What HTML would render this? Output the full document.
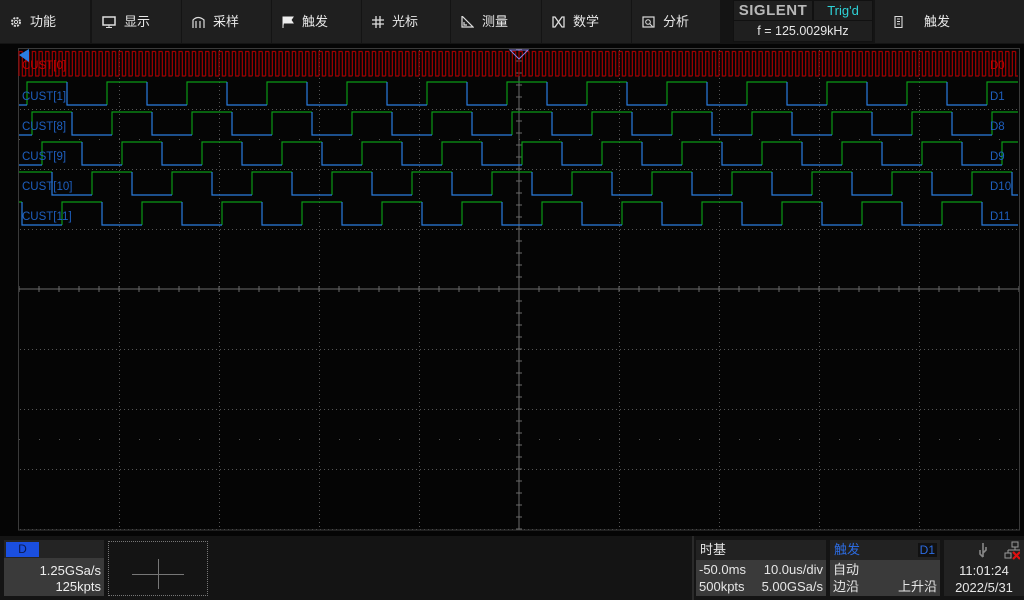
<!DOCTYPE html>
<html><head><meta charset="utf-8"><style>
*{margin:0;padding:0;box-sizing:border-box}
body{width:1024px;height:600px;background:#050505;overflow:hidden;position:relative;font-family:"Liberation Sans","Noto Sans CJK SC",sans-serif;color:#e6e6e6}
.top{position:absolute;left:0;top:0;width:1024px;height:44px;background:#141414}
.mi{position:absolute;top:0;height:43px;background:#1f1f1f;font-size:13px;line-height:43px;padding-left:10px;color:#e8e8e8}
.mi svg{vertical-align:-2px;margin-right:8px}
.bot{position:absolute;left:0;top:536px;width:1024px;height:64px;background:#141414}
.abs{position:absolute}
</style></head><body>
<div class="top">
 <div class="mi" style="left:0;width:90px"><svg width="12" height="12" viewBox="0 0 12 12"><circle cx="6" cy="6" r="4" fill="none" stroke="#ddd" stroke-width="2" stroke-dasharray="2 1.2"/><circle cx="6" cy="6" r="1.6" fill="none" stroke="#ddd"/></svg>功能</div>
 <div class="mi" style="left:92px;width:89px"><svg width="14" height="12" viewBox="0 0 14 12"><rect x="1" y="1" width="12" height="8" fill="none" stroke="#ddd" stroke-width="1.5"/><path d="M7 9v2M4 11.5h6" stroke="#ddd"/></svg>显示</div>
 <div class="mi" style="left:182px;width:89px"><svg width="13" height="12" viewBox="0 0 13 12"><path d="M1 12V4Q6 -1 12 4V12M4 12V5M8 12V5" fill="none" stroke="#ddd" stroke-width="1.2"/></svg>采样</div>
 <div class="mi" style="left:272px;width:89px"><svg width="12" height="12" viewBox="0 0 12 12"><path d="M1 12V1h10l-2 3 2 3H2" fill="#eee" stroke="#eee"/></svg>触发</div>
 <div class="mi" style="left:362px;width:88px"><svg width="12" height="12" viewBox="0 0 12 12"><path d="M4 0v12M8 0v12M0 4h12M0 8h12" stroke="#ddd" stroke-width="1.3"/></svg>光标</div>
 <div class="mi" style="left:451px;width:90px"><svg width="13" height="12" viewBox="0 0 13 12"><path d="M1 0V11H12ZM3 6v3h3" fill="none" stroke="#ddd" stroke-width="1.2"/></svg>测量</div>
 <div class="mi" style="left:542px;width:89px"><svg width="13" height="12" viewBox="0 0 13 12"><path d="M1 1h2l3.5 5 3.5-5h2v10h-2l-3.5-5-3.5 5H1Z" fill="none" stroke="#ddd" stroke-width="1.3"/></svg>数学</div>
 <div class="mi" style="left:632px;width:88px"><svg width="13" height="12" viewBox="0 0 13 12"><rect x="1" y="1" width="11" height="10" fill="none" stroke="#ddd" stroke-width="1.2"/><circle cx="6" cy="6" r="2.3" fill="none" stroke="#ddd"/><path d="M7.5 7.5l3 3" stroke="#ddd"/></svg>分析</div>
 <div class="abs" style="left:733px;top:0;width:140px;height:42px;background:#111"></div>
 <div class="abs" style="left:734px;top:1px;width:78px;height:19px;background:#1f1f1f;color:#b8b8b8;font-weight:bold;font-size:15px;line-height:19px;text-align:center;letter-spacing:0.5px">SIGLENT</div>
 <div class="abs" style="left:814px;top:1px;width:58px;height:19px;background:#1f1f1f;color:#2ed3d8;font-size:13px;line-height:20px;text-align:center">Trig'd</div>
 <div class="abs" style="left:734px;top:21px;width:138px;height:20px;background:#1f1f1f;font-size:12.5px;line-height:20px;text-align:center">f = 125.0029kHz</div>
 <div class="mi" style="left:875px;width:149px;height:43px;padding-left:18px"><svg width="11" height="12" viewBox="0 0 11 12"><path d="M2 0.5h7v11H2ZM4 3h3M4 5.5h3M4 8h3" fill="none" stroke="#ddd" stroke-width="1.1"/></svg><span style="margin-left:12px">触发</span></div>
</div>
<svg class="abs" style="left:0;top:44px" width="1024" height="492" id="scr">
 <g id="grid"></g>
 <rect x="18.5" y="4.5" width="1001" height="481.5" fill="none" stroke="#3a3a3a"/>
 <g id="wav" fill="none" stroke-width="1.2"></g>
 <g font-size="11.5" font-family="Liberation Sans,sans-serif">
  <text x="22" y="25" fill="#c00000">CUST[0]</text><text x="990" y="25" fill="#c00000">D0</text>
  <text x="22" y="56" fill="#1e5fbf">CUST[1]</text><text x="990" y="56" fill="#1e5fbf">D1</text>
  <text x="22" y="86" fill="#1e5fbf">CUST[8]</text><text x="990" y="86" fill="#1e5fbf">D8</text>
  <text x="22" y="116" fill="#1e5fbf">CUST[9]</text><text x="990" y="116" fill="#1e5fbf">D9</text>
  <text x="22" y="146" fill="#1e5fbf">CUST[10]</text><text x="990" y="146" fill="#1e5fbf">D10</text>
  <text x="22" y="176" fill="#1e5fbf">CUST[11]</text><text x="990" y="176" fill="#1e5fbf">D11</text>
 </g>
 <path d="M19 11L29 5V18Z" fill="#2a7de1"/>
 <path d="M510 6h18l-9 9Z" fill="none" stroke="#8a7fe0"/>
</svg>
<div class="bot">
 <div class="abs" style="left:4px;top:4px;width:100px;height:56px;background:#3a3a3a"></div>
 <div class="abs" style="left:4px;top:4px;width:100px;height:18px;background:#242424"></div>
 <div class="abs" style="left:6px;top:6px;width:33px;height:15px;background:#1a4fe0;color:#0c1a50;font-size:12px;text-align:center;line-height:15px">D</div>
 <div class="abs" style="left:4px;top:27px;width:97px;text-align:right;font-size:13px;line-height:16px;color:#eee">1.25GSa/s<br>125kpts</div>
 <div class="abs" style="left:108px;top:5px;width:100px;height:55px;border:1px dotted #777"></div>
 <div class="abs" style="left:132px;top:38px;width:52px;height:1px;background:#777"></div>
 <div class="abs" style="left:158px;top:23px;width:1px;height:30px;background:#777"></div>
 <div class="abs" style="left:692px;top:0;width:2px;height:64px;background:#2a2a2a"></div>
 <div class="abs" style="left:696px;top:4px;width:130px;height:20px;background:#222;font-size:13px;line-height:20px;padding-left:4px">时基</div>
 <div class="abs" style="left:696px;top:24px;width:130px;height:36px;background:#3a3a3a;font-size:13px;line-height:17px;padding:1px 3px">
  <div style="display:flex;justify-content:space-between"><span>-50.0ms</span><span>10.0us/div</span></div>
  <div style="display:flex;justify-content:space-between"><span>500kpts</span><span>5.00GSa/s</span></div></div>
 <div class="abs" style="left:830px;top:4px;width:110px;height:20px;background:#222;font-size:13px;line-height:20px;padding-left:4px;color:#2c6be0">触发<span style="position:absolute;right:3px;top:3px;background:#111;font-size:12px;line-height:14px;padding:0 2px">D1</span></div>
 <div class="abs" style="left:830px;top:24px;width:110px;height:36px;background:#3a3a3a;font-size:13px;line-height:17px;padding:1px 3px">
  <div>自动</div><div style="display:flex;justify-content:space-between"><span>边沿</span><span>上升沿</span></div></div>
 <div class="abs" style="left:944px;top:4px;width:80px;height:56px;background:#222;font-size:13px;line-height:17px;text-align:center;padding-top:22px">11:01:24<br>2022/5/31</div>
 <svg class="abs" style="left:975px;top:5px" width="45" height="20" viewBox="0 0 45 20"><path d="M8 2v14M8 16l-3-3v-4M8 12l3-3V6" stroke="#888" stroke-width="1.6" fill="none"/><rect x="37" y="1" width="6" height="5" fill="none" stroke="#999"/><path d="M40 6v3M33 9h13M33 9v3M46 9v3" stroke="#999" fill="none"/><rect x="30" y="12" width="6" height="5" fill="none" stroke="#999"/><path d="M38 11l7 7M45 11l-7 7" stroke="#e01010" stroke-width="2.2"/></svg>
</div>
<script>
var ns="http://www.w3.org/2000/svg",g=document.getElementById('grid'),w=document.getElementById('wav'),oy=44;
function el(t,a,p){var e=document.createElementNS(ns,t);for(var k in a)e.setAttribute(k,a[k]);p.appendChild(e);return e}
var dots="";
for(var x=119;x<1019;x+=100){if(x==519)continue;for(var y=50;y<530;y+=4)dots+="M"+x+" "+(y-oy)+"h1v1h-1z";}
for(var y=109;y<530;y+=60){if(y==289)continue;for(var x=20;x<1019;x+=4)dots+="M"+x+" "+(y-oy)+"h1v1h-1z";}
[139,439].forEach(function(y){for(var x=19;x<1019;x+=20)dots+="M"+x+" "+(y-oy)+"h1v1h-1z";});
el('path',{d:dots,fill:'#555'},g);
var c="M19 "+(289-oy)+"H1019M519 4V486";
for(var x=19;x<=1019;x+=20)c+="M"+x+" "+(286-oy)+"v6";
for(var y=49;y<=530;y+=12)c+="M516 "+(y-oy)+"h6";
el('path',{d:c,stroke:'#6a6a6a','stroke-width':1,fill:'none'},g);
function dig(hi,lo,rise,per,duty){
 var gp="",bp="",x0=19,x1=1018;
 var t=rise-Math.ceil((rise-x0)/per)*per;
 for(var r=t;r<x1;r+=per){var f=r+per*duty;
  var a=Math.max(r,x0),b=Math.min(f,x1);
  if(b>a)gp+="M"+(r>=x0?r:a)+" "+(r>=x0?lo:hi)+(r>=x0?"V"+hi:"")+"H"+b;
  var a2=Math.max(f,x0),b2=Math.min(r+per,x1);
  if(b2>a2)bp+="M"+a2+" "+(f>=x0?hi:lo)+(f>=x0?"V"+lo:"")+"H"+b2;}
 return [gp,bp];}
function sig(hi,lo,rise,per,col1,col2){var p=dig(hi-oy,lo-oy,rise,per,0.5);
 el('path',{d:p[0],stroke:col1},w);el('path',{d:p[1],stroke:col2},w);}
var G="#0a9a16",B="#2a7de1",R="#a00000";
sig(51.5,76,19,6.6667,R,R);
sig(82,105,27,80,G,B);
sig(112,135,32,80,G,B);
sig(142,165,42,80,G,B);
sig(172,195,12,80,G,B);
sig(202,225,62,80,G,B);
</script>
</body></html>
